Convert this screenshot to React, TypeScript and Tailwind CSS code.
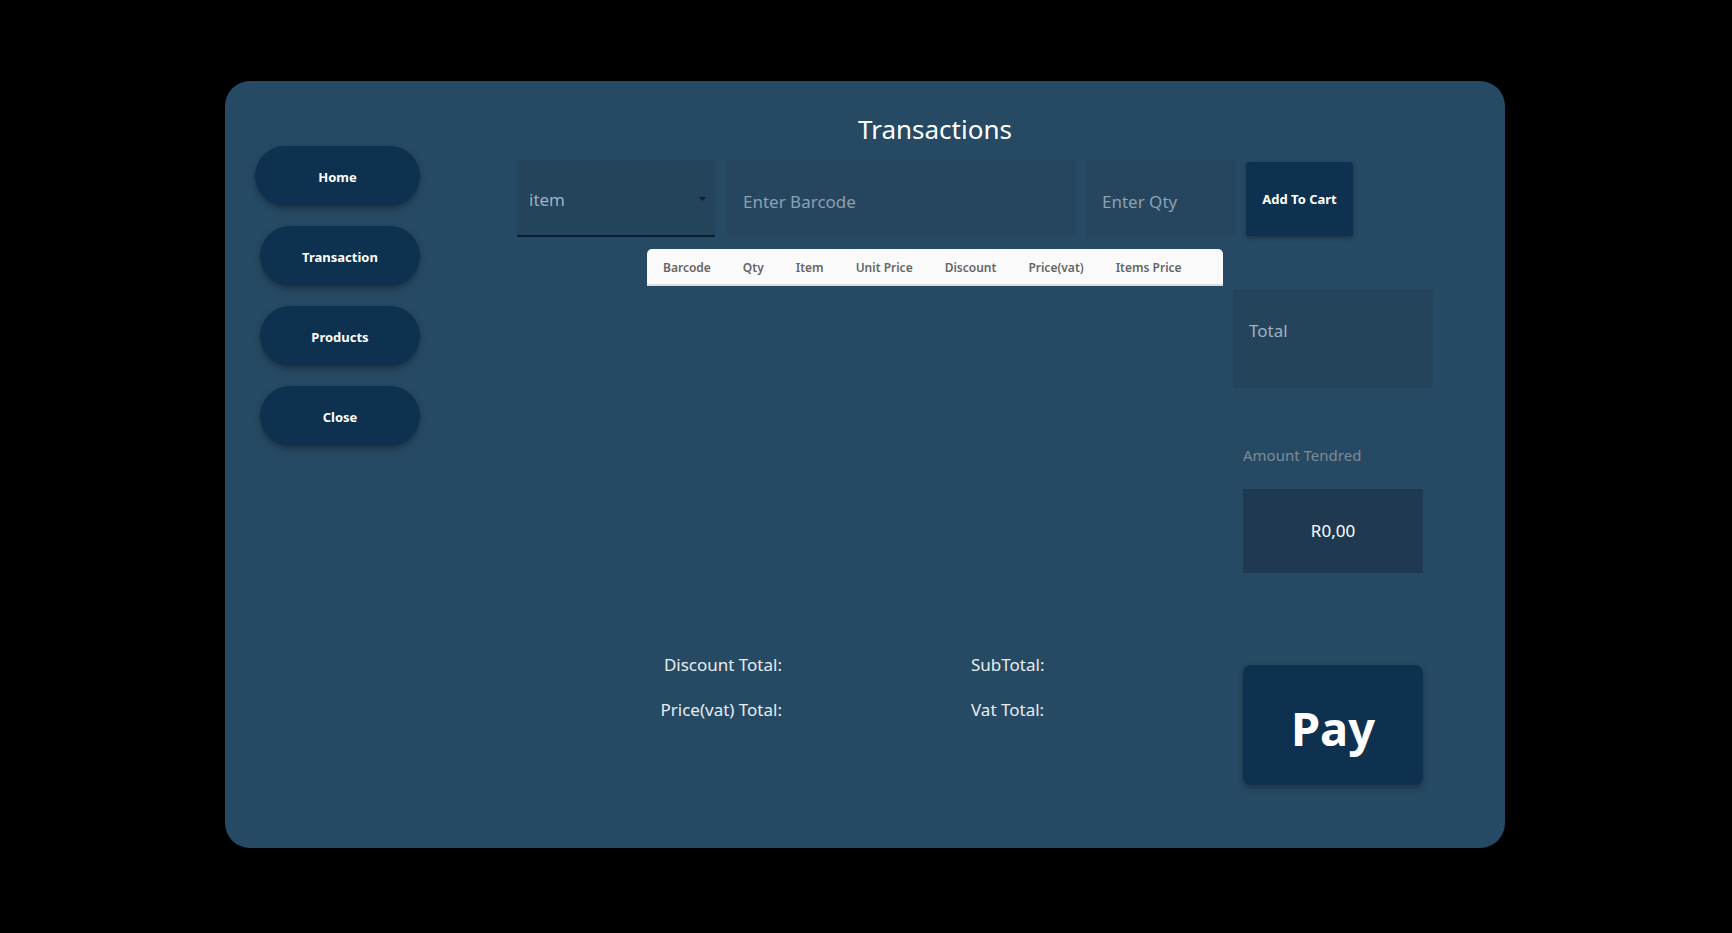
import React from "react";

const navItems = ["Home", "Transaction", "Products", "Close"];
const columns = ["Barcode", "Qty", "Item", "Unit Price", "Discount", "Price(vat)", "Items Price"];

const font = { fontFamily: '"Noto Sans", "Open Sans", sans-serif' };

export default function App() {
  return (
    <div className="min-h-[933px] w-full bg-black pt-[81px] pl-[225px]" style={font}>
      <div className="flex h-[767px] w-[1280px] rounded-[25px] bg-[#264a64]">
        {/* Sidebar */}
        <div className="flex w-[292px] shrink-0 flex-col gap-5 pl-[30px] pt-[65px]">
          {navItems.map((item, i) => (
            <button
              key={item}
              className={
                "h-[60px] rounded-[30px] bg-[#0e3150] pt-[4px] text-[13px] font-bold text-white shadow-[0_3px_6px_rgba(0,0,0,0.3)] " +
                (i === 0 ? "w-[165px]" : "ml-[5px] w-[160px]")
              }
            >
              {item}
            </button>
          ))}
        </div>

        {/* Content */}
        <div className="flex flex-col">
          <div className="h-[79px] w-[836px] pt-[30px] text-center text-[26px] leading-[36px] text-white">
            Transactions
          </div>

          {/* Input row */}
          <div className="flex h-[77px] w-[836px] items-start">
            <div className="relative flex h-[77px] w-[198px] items-center rounded-t-[3px] border-b-2 border-[#0d1f2e] bg-[#24445c] pl-[12px] pt-[4px] text-[17px] text-[#9fb0c0]">
              item
              <svg className="absolute right-[9px] top-[37px]" width="7" height="4" viewBox="0 0 7 4">
                <path d="M0 0h7L3.5 4z" fill="#0f2233" />
              </svg>
            </div>
            <div className="ml-[12px] flex h-[77px] w-[349px] items-center rounded-[3px] bg-[#25465e] pl-[16px] pt-[6px] text-[17px] text-[#8ca0b2]">
              Enter Barcode
            </div>
            <div className="ml-[10px] flex h-[77px] w-[150px] items-center rounded-[3px] bg-[#25465e] pl-[16px] pt-[6px] text-[17px] text-[#8ca0b2]">
              Enter Qty
            </div>
            <button className="ml-[10px] mt-[2px] h-[74px] w-[107px] rounded-[3px] bg-[#0e3150] pt-[2px] text-[13px] font-bold text-white shadow-[0_2px_4px_rgba(0,0,0,0.3)]">
              Add To Cart
            </button>
          </div>

          {/* Lower section */}
          <div className="mt-[12px] flex">
            <div className="flex w-[706px] flex-col">
              <div className="ml-[130px] flex h-[37px] w-[576px] items-center gap-8 rounded-t-[5px] border-b-2 border-[#dddddd] bg-[#fafafa] pl-[16px] pt-[3px] text-[12px] font-semibold text-[#666666]">
                {columns.map((c) => (
                  <span key={c}>{c}</span>
                ))}
              </div>

              <div className="mt-[367px] flex flex-col gap-[21px] text-[17px] leading-[24px] text-[#e6edf2]">
                <div className="flex">
                  <span className="w-[265px] text-right">Discount Total:</span>
                  <span className="ml-[189px]">SubTotal:</span>
                </div>
                <div className="flex">
                  <span className="w-[265px] text-right">Price(vat) Total:</span>
                  <span className="ml-[189px]">Vat Total:</span>
                </div>
              </div>
            </div>

            <div className="ml-[10px] flex w-[200px] flex-col">
              <div className="mt-[40px] h-[99px] w-[200px] rounded-[3px] bg-[#24445c] pl-[16px] pt-[30px] text-[17px] leading-[24px] text-[#9fb0c0]">
                Total
              </div>
              <div className="ml-[10px] mt-[56px] text-[15px] leading-[22px] text-[#7d8b97]">
                Amount Tendred
              </div>
              <div className="ml-[10px] mt-[23px] flex h-[84px] w-[180px] items-center justify-center bg-[#1f3a50] text-[17px] text-white">
                R0,00
              </div>
              <button className="ml-[10px] mt-[92px] h-[120px] w-[180px] rounded-lg bg-[#0e3150] pt-[6px] text-[47px] font-bold text-white shadow-[0_3px_6px_rgba(0,0,0,0.3)]">
                Pay
              </button>
            </div>
          </div>
        </div>
      </div>
    </div>
  );
}
